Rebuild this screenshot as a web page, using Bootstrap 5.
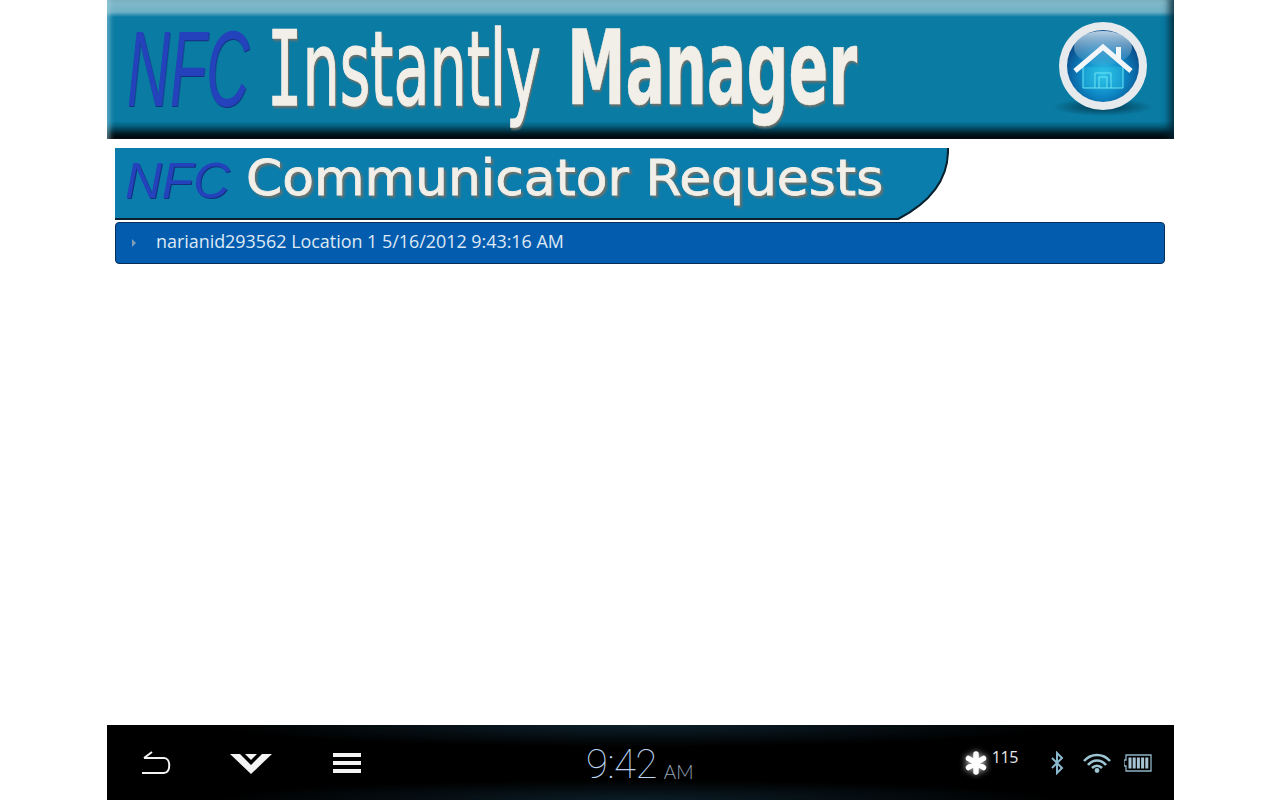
<!DOCTYPE html>
<html lang="en">
<head>
  <meta charset="utf-8">
  <meta name="viewport" content="width=device-width, initial-scale=1">
  <title>NFC Instantly Manager</title>
  <link href="https://cdn.jsdelivr.net/npm/bootstrap@5.3.3/dist/css/bootstrap.min.css" rel="stylesheet">
  <style>
    html, body { height: 100%; overflow: hidden; background: #fff; }
    .tablet-screen { width: 1067px; height: 800px; margin-left: 107px; }

    /* top banner */
    .app-banner {
      height: 139px;
      padding: 2px 21px 0 0;
      background: linear-gradient(to bottom, #86bccb 0, #6fb0c5 12px, #0a7ba3 17px, #0a7ba3 121px, #05607f 126px, #01202c 133px, #000 139px);
      box-shadow: inset 6px 0 5px -3px rgba(160,210,225,.55), inset -9px 0 7px -4px rgba(0,35,50,.8);
    }
    .banner-title { display: block; width: 800px; height: 139px; margin-top: -2px; }
    .banner-title text, .section-tab text { font-family: "DejaVu Sans", sans-serif; }
    .banner-title .title-nfc, .section-tab .title-nfc { font-family: "Liberation Sans", sans-serif; font-style: italic; fill: #2442bc; }
    .title-serif { font-family: "DejaVu Sans Mono", monospace; }
    .title-white { fill: #f1efe8; stroke: #f1efe8; filter: drop-shadow(2px 2px 1px #6f7068); }
    .title-bold { font-weight: 700; }
    .title-nfc { filter: drop-shadow(1px 1px 0 #12307e); }

    /* section heading tab */
    .section-area { padding: 9px 9px 0 8px; }
    .section-tab { display: block; width: 834px; height: 72px; }

    .request-list { margin-top: 2px; }
    .request-row {
      height: 42px;
      padding: 0 0 3px 16px;
      color: #dfe9f4;
      font: 17.9px/1 "Open Sans", sans-serif;
      background: #045caf;
      border: 1px solid #0a2f57;
      border-radius: 4px;
    }
    .row-caret { width: 0; height: 0; margin-right: 20px; margin-top: 3px; border-left: 4px solid #7f9cb8; border-top: 4px solid transparent; border-bottom: 4px solid transparent; }

    /* system bar */
    .system-bar {
      position: relative;
      height: 75px;
      background:
        radial-gradient(ellipse 420px 22px at 530px 0, rgba(20,52,70,.6), transparent),
        radial-gradient(ellipse 420px 20px at 530px 75px, rgba(20,52,70,.55), transparent),
        #000;
    }
    .nav-icons { padding-left: 33px; }
    .icon-chevron { margin: 2px 61px 0 58px; }
    .clock-box { position: absolute; left: 479px; top: 20px; }
    .clock-time { font: 100 40px/1 "Roboto", sans-serif; color: #bcd6f2; letter-spacing: -.5px; }
    .clock-ampm { font: 300 19px/1 "Lato", sans-serif; color: #98a6b8; margin-left: 7px; }
    .notif-count { font: 16px/1 "Open Sans", sans-serif; letter-spacing: -.4px; color: #e6e8ea; margin: -12px 0 0 -1.5px; }
    .status-icons { padding-right: 22px; }
    .icon-bt { margin-left: 32px; }
    .icon-wifi { margin-left: 19px; }
    .icon-batt { margin-left: 13px; }
  </style>
</head>
<body>

<div class="tablet-screen d-flex flex-column">

  <!-- Header -->
  <header class="app-banner d-flex align-items-center justify-content-between">
    <svg class="banner-title" viewBox="0 0 800 139" role="img" aria-label="NFC Instantly Manager">
      <text class="title-nfc" transform="translate(20 106) scale(.55 1)" font-size="108">NFC</text>
      <text class="title-white" transform="translate(160 105) scale(.571 1)" font-size="103" stroke-width="1.4"><tspan class="title-serif">I</tspan>nstantly</text>
      <text class="title-white title-bold" transform="translate(460 104) scale(.57 1)" font-size="103" stroke-width=".5">Manager</text>
    </svg>
    <svg width="100" height="100" viewBox="0 0 100 100" role="img" aria-label="Home">
      <defs>
        <radialGradient id="orb" cx="50%" cy="62%" r="55%">
          <stop offset="0" stop-color="#2fc4ea"/>
          <stop offset=".55" stop-color="#0d86c4"/>
          <stop offset="1" stop-color="#0a4f8c"/>
        </radialGradient>
        <linearGradient id="gloss" x1="0" y1="0" x2="0" y2="1">
          <stop offset="0" stop-color="#d6e6f2" stop-opacity=".85"/>
          <stop offset="1" stop-color="#7fb8dc" stop-opacity=".1"/>
        </linearGradient>
        <radialGradient id="orbShade" cx="50%" cy="50%" r="50%">
          <stop offset="0" stop-color="#002c3e" stop-opacity=".85"/>
          <stop offset="1" stop-color="#002c3e" stop-opacity="0"/>
        </radialGradient>
      </defs>
      <ellipse cx="50" cy="86" rx="50" ry="9" fill="url(#orbShade)"/>
      <circle cx="50" cy="45" r="44" fill="#e6eaec"/>
      <circle cx="50" cy="45" r="36" fill="url(#orb)"/>
      <ellipse cx="50" cy="27" rx="29" ry="17" fill="url(#gloss)"/>
      <path d="M30 46V67H70V46M42 67V52H58V67M46 67V56H54V67" fill="#28c4e4" fill-opacity=".35" stroke="#6de6f2" stroke-width="1"/>
      <path d="M22 50L50 26L78 50" fill="none" stroke="#f2f6f8" stroke-width="5"/>
      <path d="M63 35V26H68V40" fill="#f2f6f8"/>
    </svg>
  </header>

  <!-- Requests -->
  <main class="section-area flex-grow-1">
    <svg class="section-tab" viewBox="0 0 834 72" role="img" aria-label="NFC Communicator Requests">
      <path d="M0 0H833C834 34 812 56 783 72H0Z" fill="#0b7dac"/>
      <path d="M0 71H783C812 56 834 34 833 0" fill="none" stroke="#06202c" stroke-width="2"/>
      <text class="title-nfc" transform="translate(10 50) scale(1.02 1)" font-size="50">NFC</text>
      <text class="title-white" transform="translate(131 47) scale(1.038 1)" font-size="50" stroke-width=".8">Communicator Requests</text>
    </svg>
    <div class="list-group request-list">
      <div class="request-row d-flex align-items-center">
        <span class="row-caret"></span>
        <span>narianid293562 Location 1 5/16/2012 9:43:16 AM</span>
      </div>
    </div>
  </main>

  <!-- System bar -->
  <footer class="system-bar d-flex align-items-center justify-content-between">
    <div class="nav-icons d-flex align-items-center">
      <svg width="32" height="28" viewBox="0 0 32 28" fill="none" stroke="#f2f2f2" stroke-width="2">
        <path d="M2 24H24C31 24 31 9 24 9H4M12 3L4 9"/>
      </svg>
      <svg class="icon-chevron" width="42" height="24" viewBox="0 0 42 24" fill="#f4f4f4">
        <path d="M0 2H10L21 13L32 2H42L21 22Z"/>
        <path d="M15 2H27L21 8Z"/>
      </svg>
      <svg width="28" height="22" viewBox="0 0 28 22" fill="#f4f4f4">
        <rect y="1" width="28" height="4"/><rect y="9" width="28" height="4"/><rect y="17" width="28" height="4"/>
      </svg>
    </div>
    <div class="clock-box d-flex align-items-end">
      <span class="clock-time">9:42</span>
      <span class="clock-ampm mb-1">AM</span>
    </div>
    <div class="status-icons d-flex align-items-center">
      <svg width="34" height="34" viewBox="0 0 34 34">
        <defs><filter id="glow" x="-50%" y="-50%" width="200%" height="200%"><feGaussianBlur stdDeviation="3"/></filter></defs>
        <g stroke="#fff" stroke-width="6" filter="url(#glow)" opacity=".7"><path d="M17 6V28M7 11L27 23M27 11L7 23"/></g>
        <g stroke="#fff" stroke-width="5.5" stroke-linecap="round"><path d="M17 8V26M9.5 12.5L24.5 21.5M24.5 12.5L9.5 21.5"/></g>
      </svg>
      <span class="notif-count">115</span>
      <svg class="icon-bt" width="14" height="24" viewBox="0 0 14 24" fill="none" stroke="#8ab8cc" stroke-width="2">
        <path d="M2 7L12 17L7 22V2L12 7L2 17"/>
      </svg>
      <svg class="icon-wifi" width="28" height="20" viewBox="0 0 28 20" fill="none" stroke="#9cc4d2" stroke-width="2.6">
        <path d="M1 8C8 0 20 0 27 8M5 12C10 6 18 6 23 12M9 15C12 12 16 12 19 15"/>
        <circle cx="14" cy="17.5" r="2.4" fill="#9cc4d2" stroke="none"/>
      </svg>
      <svg class="icon-batt" width="28" height="18" viewBox="0 0 28 18" fill="#a8c4d2">
        <path d="M2 1H27V17H2V12H0V6H2Z" fill="none" stroke="#8fb4c6" stroke-width="1.3"/>
        <rect x="4.5" y="3.5" width="3" height="11"/><rect x="8.7" y="3.5" width="3" height="11"/><rect x="12.9" y="3.5" width="3" height="11"/><rect x="17.1" y="3.5" width="3" height="11"/><rect x="21.3" y="3.5" width="3" height="11"/>
      </svg>
    </div>
  </footer>
</div>

<script src="https://cdn.jsdelivr.net/npm/bootstrap@5.3.3/dist/js/bootstrap.bundle.min.js"></script>
</body>
</html>
